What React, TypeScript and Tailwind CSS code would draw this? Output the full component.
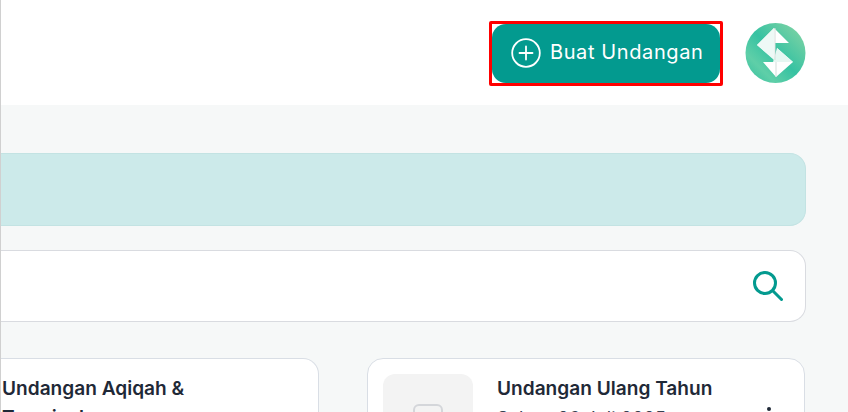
import React from "react";

function Logo() {
  return (
    <svg width="62" height="62" viewBox="0 0 62 62" className="shrink-0">
      <defs>
        <linearGradient id="g" x1="0" y1="1" x2="1" y2="0">
          <stop offset="0" stopColor="#2fbf9f" />
          <stop offset="0.25" stopColor="#5fcfa8" />
          <stop offset="0.5" stopColor="#36c2a2" />
          <stop offset="0.85" stopColor="#72d0a4" />
          <stop offset="1" stopColor="#45c6a4" />
        </linearGradient>
      </defs>
      <circle cx="31.5" cy="30" r="30" fill="url(#g)" />
      <g transform="translate(1 0)">
        <path d="M29 5 L44 20 L30 20 L30 37 L12 22 Z" fill="#ffffff" />
        <path d="M29 5 L29 37 L12 22 Z" fill="#eef9f6" />
        <path d="M32 25 L48 39 L31 54 L18 39 L32 39 Z" fill="#ffffff" />
        <path d="M32 25 L48 39 L28 39 Z" fill="#e6f7f2" />
        <path d="M30 5 L30 37 M31 39 L31 54" stroke="#d5dedb" strokeWidth="1" />
      </g>
    </svg>
  );
}

export default function App() {
  return (
    <div className="w-[848px] h-[412px] overflow-hidden bg-[#f6f8f8] border-l border-[#d0d0d0] flex flex-col font-['Inter',sans-serif]">
      <header className="h-[105px] shrink-0 bg-white flex items-start justify-end gap-[21px] pt-[21px] pr-[42px]">
        <div className="border-[3px] border-[#ff0000] rounded-[2px] bg-white">
          <button className="h-[59px] w-[228px] rounded-[14px] bg-[#039a8f] flex items-center gap-[9px] pl-[19px] pb-[4px] text-white text-xl tracking-[0.6px]">
            <svg width="30" height="30" viewBox="0 0 30 30" fill="none" stroke="white" strokeWidth="1.8" strokeLinecap="round" className="mt-[3px]">
              <circle cx="15" cy="15" r="13.8" />
              <path d="M15 8.5v13M8.5 15h13" />
            </svg>
            Buat Undangan
          </button>
        </div>
        <div className="pt-[2px]"><Logo /></div>
      </header>
      <main className="flex-1 pt-[48px] pr-[42px] flex flex-col">
        <div className="h-[73px] rounded-r-2xl border border-l-0 border-[#c3e3e3] bg-[#cceaea]" />
        <div className="mt-[24px] h-[72px] rounded-r-2xl border border-l-0 border-[#d9dbe0] bg-white flex items-center justify-end pr-[22px]">
          <svg width="32" height="32" viewBox="0 0 32 32" fill="none" stroke="#039a8f" strokeWidth="3" strokeLinecap="round">
            <circle cx="14" cy="13" r="10.5" />
            <path d="M22 21 L30.5 29.5" />
          </svg>
        </div>
        <div className="mt-[36px] grid grid-cols-[318px_438px] gap-[48px]">
          <div className="h-[100px] rounded-r-2xl border border-l-0 border-[#d9dee5] bg-white pl-[1px] pt-[15px]">
            <p className="text-[19.1px] leading-[28px] font-semibold text-[#1f2937]">Undangan Aqiqah &amp;</p>
            <p className="mt-[1px] text-[19.1px] leading-[28px] font-semibold text-[#1f2937]">Tasmiyah</p>
          </div>
          <div className="relative h-[100px] rounded-2xl border border-[#d9dee5] bg-white pl-[15px] pt-[15px] flex gap-[24px]">
            <div className="w-[90px] h-[90px] shrink-0 rounded-xl bg-[#f3f3f3] flex justify-center pt-[30px]">
              <div className="w-[30px] h-[30px] rounded-md border-2 border-[#d4d6da]" />
            </div>
            <div className="flex-1 min-w-0">
              <p className="text-[19.1px] leading-[28px] font-semibold text-[#1f2937]">Undangan Ulang Tahun</p>
              <p className="text-[18px] leading-[34px] text-[#374151] tracking-[0.01em]">Sabtu, 26 Juli 2025</p>
            </div>
            <svg width="4" height="20" viewBox="0 0 4 20" className="absolute right-[33px] top-[48px]" fill="#1f2937">
              <circle cx="2" cy="2" r="2" />
              <circle cx="2" cy="10" r="2" />
              <circle cx="2" cy="18" r="2" />
            </svg>
          </div>
        </div>
      </main>
    </div>
  );
}
